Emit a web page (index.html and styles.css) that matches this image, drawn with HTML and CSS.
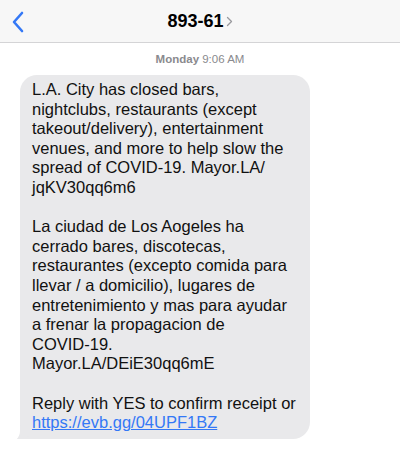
FILE: index.html
```html
<!DOCTYPE html>
<html lang="en">
<head>
  <meta charset="UTF-8">
  <meta name="viewport" content="width=device-width, initial-scale=1.0">
  <title>893-61</title>
  <link rel="stylesheet" href="styles.css">
</head>
<body>
  <header class="nav-bar">
    <a class="back-button" href="#">
      <svg width="14" height="22" viewBox="0 0 14 22">
        <path d="M11 2 L3 11 L11 20" fill="none" stroke="#3478f6" stroke-width="2.6" stroke-linecap="round" stroke-linejoin="round"/>
      </svg>
    </a>
    <div class="contact">
      <span class="contact-name">893-61</span>
      <svg class="contact-arrow" width="7" height="11" viewBox="0 0 7 11">
        <path d="M1.5 1.5 L5.5 5.5 L1.5 9.5" fill="none" stroke="#9a9a9e" stroke-width="1.3" stroke-linecap="round" stroke-linejoin="round"/>
      </svg>
    </div>
  </header>

  <div class="thread">
    <p class="timestamp"><b>Monday</b> 9:06 AM</p>

    <div class="bubble">
      <p>L.A. City has closed bars,<br>
        nightclubs, restaurants (except<br>
        takeout/delivery), entertainment<br>
        venues, and more to help slow the<br>
        spread of COVID-19. Mayor.LA/<br>
        jqKV30qq6m6</p>
      <p>La ciudad de Los Aogeles ha<br>
        cerrado bares, discotecas,<br>
        restaurantes (excepto comida para<br>
        llevar / a domicilio), lugares de<br>
        entretenimiento y mas para ayudar<br>
        a frenar la propagacion de<br>
        COVID-19.<br>
        Mayor.LA/DEiE30qq6mE</p>
      <p>Reply with YES to confirm receipt or<br>
        <a href="#">https://evb.gg/04UPF1BZ</a></p>
      <svg class="tail" width="24" height="22" viewBox="0 0 24 22">
        <path d="M8 0 L8 10 C8 15 5 19 0 22 C6 22.5 12 21 16 18 L24 18 L24 0 Z" fill="#e9e9eb"/>
      </svg>
    </div>
  </div>
</body>
</html>
```

FILE: styles.css
```css
/* Messages thread */

body {
  margin: 0;
  background-color: #fff;
  font-family: "Liberation Sans", Arial, sans-serif;
  color: #111;
}

.nav-bar {
  height: 42px;
  background-color: #f7f7f7;
  border-bottom: 1px solid #d4d4d6;
  display: flex;
  align-items: center;
  justify-content: center;
  position: relative;
}

.back-button {
  position: absolute;
  left: 11px;
  top: 11px;
  display: block;
  width: 14px;
  height: 22px;
}

.back-button svg {
  display: block;
}

.contact {
  display: flex;
  align-items: center;
  gap: 2px;
}

.contact-name {
  font-size: 18px;
  font-weight: bold;
  color: #000;
}

.contact-arrow {
  display: block;
  margin-top: 1px;
}

.thread {
  padding: 0 20px;
}

.timestamp {
  margin: 10px 0 10px;
  text-align: center;
  font-size: 11.5px;
  color: #8a8a8e;
}

.timestamp b {
  font-weight: bold;
}

.bubble {
  position: relative;
  width: 266px;
  padding: 5px 12px 6px;
  background-color: #e9e9eb;
  border-radius: 17px;
  font-size: 16.5px;
  line-height: 19.6px;
  white-space: nowrap;
}

.bubble p {
  margin: 0 0 19.6px;
}

.bubble p:last-of-type {
  margin-bottom: 0;
}

.bubble a {
  color: #3478f6;
  text-decoration: underline;
}

/* tail at the bottom-left corner of the bubble, kept under the text */
.tail {
  position: absolute;
  left: -8px;
  bottom: -4px;
  display: block;
  z-index: -1;
}
```
